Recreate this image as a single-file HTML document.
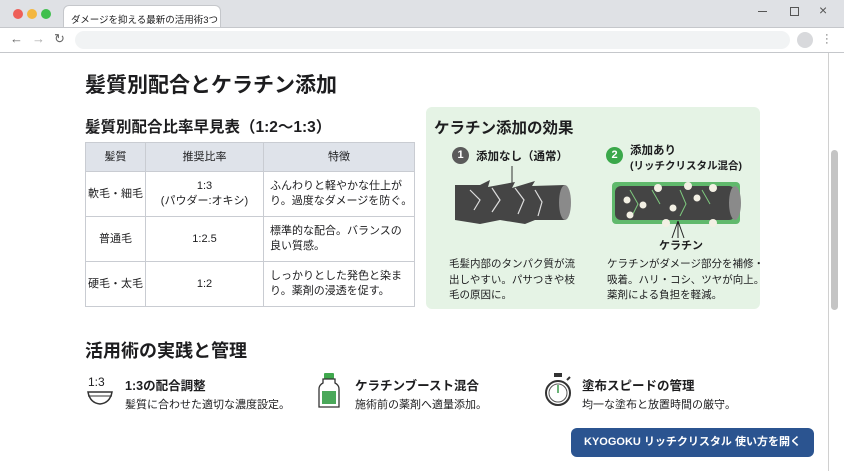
<!DOCTYPE html>
<html><head><meta charset="utf-8"><style>
*{box-sizing:border-box;margin:0;padding:0}
body{width:844px;height:471px;overflow:hidden;background:#dfe1e5;font-family:"Liberation Sans","Noto Sans CJK JP",sans-serif;color:#1d1d1f;position:relative}
.abs{position:absolute}
.b{font-weight:bold}
td,th{border:1px solid #c9ccd2;font-size:11px;text-align:center;vertical-align:middle;line-height:15px}
th{background:#dfe3ea;font-weight:normal;height:29px}
td.l{text-align:left;padding-left:6px}
</style></head><body>
<div class="abs" style="left:13px;top:9px;width:10px;height:10px;border-radius:5px;background:#ee5f58"></div>
<div class="abs" style="left:27px;top:9px;width:10px;height:10px;border-radius:5px;background:#f4b73f"></div>
<div class="abs" style="left:41px;top:9px;width:10px;height:10px;border-radius:5px;background:#3fbf4d"></div>
<div class="abs" style="left:63px;top:5px;width:158px;height:23px;background:#fff;border-radius:6px 6px 0 0;border:1px solid #c5c7cb;border-bottom:none;font-size:9.5px;padding:6px 0 0 7px;white-space:nowrap">ダメージを抑える最新の活用術3つ</div>
<div class="abs" style="left:758px;top:11px;width:9px;height:1px;background:#555"></div>
<div class="abs" style="left:790px;top:7px;width:9px;height:9px;border:1px solid #555"></div>
<div class="abs" style="left:819px;top:2px;font-size:14px;color:#555">×</div>
<div class="abs" style="left:0;top:27px;width:844px;height:26px;background:#fff;border-top:1px solid #c5c7cb;border-bottom:1px solid #c5c7cb"></div>
<div class="abs" style="left:10px;top:31px;font-size:13px;color:#666">←</div>
<div class="abs" style="left:32px;top:31px;font-size:13px;color:#aaa">→</div>
<div class="abs" style="left:54px;top:31px;font-size:13px;color:#666">↻</div>
<div class="abs" style="left:75px;top:31px;width:715px;height:18px;border-radius:9px;background:#f1f3f4"></div>
<div class="abs" style="left:797px;top:32px;width:16px;height:16px;border-radius:8px;background:#d8d9dc"></div>
<div class="abs" style="left:825px;top:33px;font-size:11px;color:#555;line-height:4px">·<br>·<br>·</div>
<div class="abs" style="left:0;top:53px;width:844px;height:418px;background:#fff"></div>
<div class="abs" style="left:828px;top:53px;width:1px;height:418px;background:#d0d0d0"></div>
<div class="abs" style="left:831px;top:150px;width:7px;height:160px;border-radius:4px;background:#c4c4c4"></div>

<div class="abs b" style="left:85px;top:69px;font-size:21px">髪質別配合とケラチン添加</div>
<div class="abs b" style="left:85px;top:115px;font-size:15.5px">髪質別配合比率早見表（1:2〜1:3）</div>
<table class="abs" style="left:85px;top:142px;width:330px;border-collapse:collapse">
<tr><th style="width:60px">髪質</th><th style="width:118px">推奨比率</th><th>特徴</th></tr>
<tr style="height:45px"><td>軟毛・細毛</td><td>1:3<br>(パウダー:オキシ)</td><td class="l">ふんわりと軽やかな仕上が<br>り。過度なダメージを防ぐ。</td></tr>
<tr style="height:45px"><td>普通毛</td><td>1:2.5</td><td class="l">標準的な配合。バランスの<br>良い質感。</td></tr>
<tr style="height:45px"><td>硬毛・太毛</td><td>1:2</td><td class="l">しっかりとした発色と染ま<br>り。薬剤の浸透を促す。</td></tr>
</table>

<div class="abs" style="left:426px;top:107px;width:334px;height:202px;background:#e5f3e5;border-radius:6px"></div>
<div class="abs b" style="left:434px;top:116px;font-size:15.5px">ケラチン添加の効果</div>
<div class="abs b" style="left:452px;top:147px;width:17px;height:17px;border-radius:9px;background:#5a5a5a;color:#fff;font-size:11px;text-align:center;line-height:17px">1</div>
<div class="abs b" style="left:476px;top:148px;font-size:11.5px">添加なし（通常）</div>
<div class="abs b" style="left:606px;top:147px;width:17px;height:17px;border-radius:9px;background:#3aa84a;color:#fff;font-size:11px;text-align:center;line-height:17px">2</div>
<div class="abs b" style="left:630px;top:144px;font-size:11.5px;line-height:15px">添加あり<br><span style="font-size:10.5px">(リッチクリスタル混合)</span></div>
<svg class="abs" style="left:440px;top:160px" width="330" height="90">
<line x1="72" y1="6" x2="72" y2="26" stroke="#333"/>
<path d="M15 25 L40 25 L50 20 L48 27 L75 22 L72 28 L95 21 L92 26 L125 25 L125 60 L95 60 L85 64 L60 60 L40 64 L15 60 Z" fill="#454545"/>
<ellipse cx="125" cy="42.5" rx="6" ry="17.5" fill="#8a8a8a"/>
<path d="M30 30 L40 40 L34 50 M52 28 L60 40 L52 52 M75 28 L84 40 L78 54 M95 30 L102 42 L98 56" stroke="#ddd" fill="none" stroke-width="1.2"/>
<rect x="172" y="22" width="128" height="42" rx="4" fill="#3faa4d" opacity=".8"/>
<rect x="175" y="26" width="120" height="34" rx="6" fill="#444"/>
<ellipse cx="295" cy="43" rx="6" ry="17" fill="#8a8a8a"/>
<path d="M190 30 L198 44 L192 56 M212 30 L220 44 M240 30 L246 44 L240 56 M262 30 L270 44" stroke="#7ec97e" fill="none"/>
<g fill="#f3f0e4"><circle cx="218" cy="28" r="4"/><circle cx="248" cy="26" r="4"/><circle cx="187" cy="40" r="3.5"/><circle cx="203" cy="45" r="3.5"/><circle cx="233" cy="48" r="3.5"/><circle cx="257" cy="38" r="3.5"/><circle cx="190" cy="55" r="3.5"/><circle cx="226" cy="63" r="4"/><circle cx="273" cy="63" r="4"/><circle cx="273" cy="28" r="4"/></g>
<path d="M238 61 L232 78 M238 61 L238 78 M238 61 L244 78" stroke="#222" fill="none"/>
</svg>
<div class="abs b" style="left:659px;top:237px;font-size:11px">ケラチン</div>
<div class="abs" style="left:449px;top:257px;font-size:10.5px;line-height:15.5px">毛髪内部のタンパク質が流<br>出しやすい。パサつきや枝<br>毛の原因に。</div>
<div class="abs" style="left:607px;top:257px;font-size:10.5px;line-height:15.5px;white-space:nowrap">ケラチンがダメージ部分を補修・<br>吸着。ハリ・コシ、ツヤが向上。<br>薬剤による負担を軽減。</div>

<div class="abs b" style="left:85px;top:337px;font-size:18px">活用術の実践と管理</div>
<div class="abs" style="left:88px;top:375px;font-size:12px">1:3</div>
<svg class="abs" style="left:86px;top:390px" width="28" height="16"><path d="M2 2 H26 Q24 13 14 14 Q4 13 2 2Z" fill="none" stroke="#333" stroke-width="1.5"/><line x1="2" y1="6" x2="26" y2="6" stroke="#333"/></svg>
<div class="abs b" style="left:125px;top:375px;font-size:12.5px">1:3の配合調整</div>
<div class="abs" style="left:125px;top:396px;font-size:11px">髪質に合わせた適切な濃度設定。</div>
<svg class="abs" style="left:318px;top:372px" width="22" height="38"><rect x="6" y="1" width="10" height="6" rx="1" fill="#3fa84d"/><path d="M5 7 H17 V11 Q21 13 21 17 V35 H1 V17 Q1 13 5 11Z" fill="#fff" stroke="#333" stroke-width="1.3"/><rect x="4" y="19" width="14" height="13" fill="#4aa85a"/></svg>
<div class="abs b" style="left:355px;top:375px;font-size:12.5px">ケラチンブースト混合</div>
<div class="abs" style="left:355px;top:396px;font-size:11px">施術前の薬剤へ適量添加。</div>
<svg class="abs" style="left:543px;top:372px" width="30" height="36"><rect x="11" y="1" width="8" height="4" fill="#333"/><circle cx="15" cy="21" r="12" fill="none" stroke="#333" stroke-width="2"/><circle cx="15" cy="21" r="9" fill="none" stroke="#555"/><line x1="15" y1="21" x2="15" y2="13" stroke="#3a9a4a" stroke-width="1.5"/><line x1="24" y1="8" x2="27" y2="5" stroke="#333" stroke-width="2"/></svg>
<div class="abs b" style="left:582px;top:375px;font-size:12.5px">塗布スピードの管理</div>
<div class="abs" style="left:582px;top:396px;font-size:11px">均一な塗布と放置時間の厳守。</div>

<div class="abs b" style="left:571px;top:428px;width:243px;height:29px;border-radius:6px;background:#2b5490;color:#fff;font-size:11px;text-align:center;line-height:29px;white-space:nowrap">KYOGOKU リッチクリスタル 使い方を開く</div>
</body></html>
